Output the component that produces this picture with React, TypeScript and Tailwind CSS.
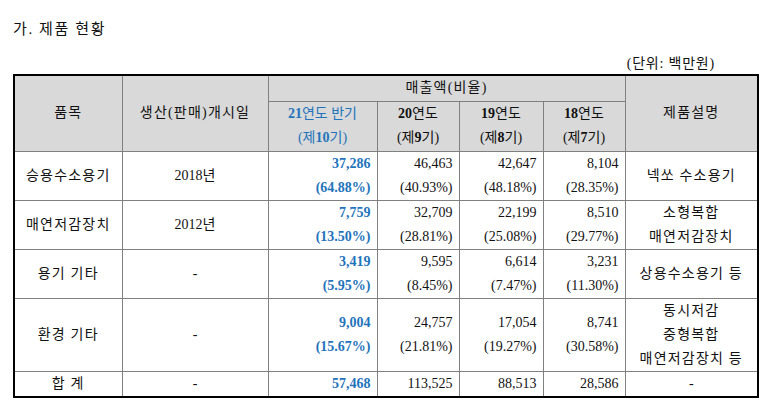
import React from "react";

const F = { fontFamily: "'Liberation Serif', 'Noto Sans CJK KR', serif" };

type Cell = { v: string; p?: string };

const rows: {
  name: string;
  start: string;
  cur: Cell;
  others: Cell[];
  desc: string[];
  h: string;
}[] = [
  {
    name: "승용수소용기",
    start: "2018년",
    cur: { v: "37,286", p: "(64.88%)" },
    others: [
      { v: "46,463", p: "(40.93%)" },
      { v: "42,647", p: "(48.18%)" },
      { v: "8,104", p: "(28.35%)" },
    ],
    desc: ["넥쏘 수소용기"],
    h: "h-[49px]",
  },
  {
    name: "매연저감장치",
    start: "2012년",
    cur: { v: "7,759", p: "(13.50%)" },
    others: [
      { v: "32,709", p: "(28.81%)" },
      { v: "22,199", p: "(25.08%)" },
      { v: "8,510", p: "(29.77%)" },
    ],
    desc: ["소형복합", "매연저감장치"],
    h: "h-[49px]",
  },
  {
    name: "용기 기타",
    start: "-",
    cur: { v: "3,419", p: "(5.95%)" },
    others: [
      { v: "9,595", p: "(8.45%)" },
      { v: "6,614", p: "(7.47%)" },
      { v: "3,231", p: "(11.30%)" },
    ],
    desc: ["상용수소용기 등"],
    h: "h-[49px]",
  },
  {
    name: "환경 기타",
    start: "-",
    cur: { v: "9,004", p: "(15.67%)" },
    others: [
      { v: "24,757", p: "(21.81%)" },
      { v: "17,054", p: "(19.27%)" },
      { v: "8,741", p: "(30.58%)" },
    ],
    desc: ["동시저감", "중형복합", "매연저감장치 등"],
    h: "h-[72px]",
  },
];

const td = "border border-[#808080] p-0 align-middle";
const ko = "tracking-[1.2px]";

export default function App() {
  return (
    <div className="w-[770px] h-[415px] bg-white text-[#111] text-[14px] leading-[24px]" style={F}>
      <div className={`pl-[13px] pt-[18px] text-[15px] leading-[22px] tracking-[1.6px]`}>가. 제품 현황</div>
      <div className={`flex justify-end pr-[55px] pt-[14px] leading-[20px] tracking-[0.8px]`}>(단위: 백만원)</div>
      <div className="pl-[13px]">
        <table className="border-collapse border-2 border-black table-fixed w-[744px]">
          <colgroup>
            <col className="w-[108px]" />
            <col className="w-[146px]" />
            <col className="w-[109px]" />
            <col className="w-[82px]" />
            <col className="w-[84px]" />
            <col className="w-[82px]" />
            <col className="w-[133px]" />
          </colgroup>
          <thead className="bg-[#d9d9d9]">
            <tr className="h-[26px]">
              <th rowSpan={2} className={`${td} ${ko} font-normal text-center`}>품목</th>
              <th rowSpan={2} className={`${td} ${ko} font-normal text-center`}>생산(판매)개시일</th>
              <th colSpan={4} className={`${td} ${ko} font-normal text-center`}>매출액(비율)</th>
              <th rowSpan={2} className={`${td} ${ko} font-normal text-center`}>제품설명</th>
            </tr>
            <tr className="h-[50px]">
              <th className={`${td} font-normal text-center text-[#1f74bb]`}>
                <div><b>21</b>연도 반기</div>
                <div>(제<b>10</b>기)</div>
              </th>
              <th className={`${td} font-normal text-center`}>
                <div><b>20</b>연도</div>
                <div>(제<b>9</b>기)</div>
              </th>
              <th className={`${td} font-normal text-center`}>
                <div><b>19</b>연도</div>
                <div>(제<b>8</b>기)</div>
              </th>
              <th className={`${td} font-normal text-center`}>
                <div><b>18</b>연도</div>
                <div>(제<b>7</b>기)</div>
              </th>
            </tr>
          </thead>
          <tbody>
            {rows.map((r) => (
              <tr key={r.name} className={r.h}>
                <td className={`${td} ${ko} text-center`}>{r.name}</td>
                <td className={`${td} text-center`}>{r.start}</td>
                <td className={`${td} text-right pr-[6px] font-bold text-[#1f74bb]`}>
                  <div>{r.cur.v}</div>
                  <div>{r.cur.p}</div>
                </td>
                {r.others.map((o, i) => (
                  <td key={i} className={`${td} text-right pr-[6px]`}>
                    <div>{o.v}</div>
                    <div>{o.p}</div>
                  </td>
                ))}
                <td className={`${td} ${ko} text-center`}>
                  {r.desc.map((d) => (
                    <div key={d}>{d}</div>
                  ))}
                </td>
              </tr>
            ))}
            <tr className="h-[26px]">
              <td className={`${td} ${ko} text-center`}>합 계</td>
              <td className={`${td} text-center`}>-</td>
              <td className={`${td} text-right pr-[6px] font-bold text-[#1f74bb]`}>57,468</td>
              <td className={`${td} text-right pr-[6px]`}>113,525</td>
              <td className={`${td} text-right pr-[6px]`}>88,513</td>
              <td className={`${td} text-right pr-[6px]`}>28,586</td>
              <td className={`${td} text-center`}>-</td>
            </tr>
          </tbody>
        </table>
      </div>
    </div>
  );
}
